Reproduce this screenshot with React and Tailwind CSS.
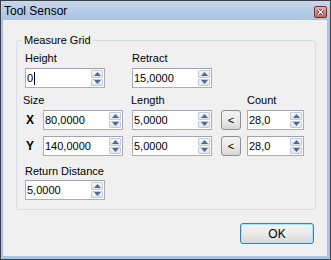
import React from "react";

function Arrow({ up }) {
  return (
    <svg width="7" height="4" viewBox="0 0 7 4">
      {up ? (
        <path d="M0 4 L3.5 0 L7 4 Z" fill="#4c6a9c" />
      ) : (
        <path d="M0 0 L3.5 4 L7 0 Z" fill="#4c6a9c" />
      )}
    </svg>
  );
}

function SpinInput({ value, width, caret }) {
  return (
    <div
      className={`${width} h-[20px] flex items-stretch bg-white border border-[#abadb3] border-t-[#a0a3ab]`}
    >
      <div className="flex-1 pl-[1px] flex items-center text-[11px] leading-none text-black">
        {value}
        {caret && <span className="w-[1px] h-[13px] bg-black ml-[1px]" />}
      </div>
      <div className="w-[13px] flex flex-col gap-[1px] py-[1px] pr-[1px]">
        <div className="flex-1 flex items-center justify-center border border-[#c4cbd7] bg-gradient-to-b from-[#f4f6f9] to-[#dfe5ee] rounded-[1px]">
          <Arrow up />
        </div>
        <div className="flex-1 flex items-center justify-center border border-[#c4cbd7] bg-gradient-to-b from-[#f4f6f9] to-[#dfe5ee] rounded-[1px]">
          <Arrow />
        </div>
      </div>
    </div>
  );
}

function CopyButton() {
  return (
    <button className="w-[20px] h-[20px] flex items-center justify-center rounded-[3px] border border-[#8e8f8f] bg-gradient-to-b from-[#f2f2f2] via-[#ebebeb] to-[#d6d6d6] text-[11px] leading-none text-black">
      &lt;
    </button>
  );
}

export default function App() {
  return (
    <div
      className="w-[331px] h-[260px] flex flex-col border border-[#3c4048] bg-[#a6c4e4] text-black"
      style={{ fontFamily: '"Liberation Sans", Arial, sans-serif' }}
    >
      {/* title bar */}
      <div className="h-[19px] flex items-center justify-between pl-[3px] pr-[3px] bg-gradient-to-b from-[#c5d8ee] to-[#a9c3e3]">
        <span className="text-[12px] leading-none text-black">Tool Sensor</span>
        <div className="w-[13px] h-[12px] mt-[3px] flex items-center justify-center rounded-[2px] border border-[#6e3232] bg-gradient-to-b from-[#e2b3ac] to-[#c06a5e]">
          <svg width="7" height="6" viewBox="0 0 7 6">
            <path d="M1 0.5 L6 5.5 M6 0.5 L1 5.5" stroke="#3a1a1a" strokeWidth="2.6" />
            <path d="M1 0.5 L6 5.5 M6 0.5 L1 5.5" stroke="#ffffff" strokeWidth="1.4" />
          </svg>
        </div>
      </div>

      {/* client area */}
      <div className="flex-1 ml-[2px] mr-[3px] mb-[3px] bg-[#f0f0f0] flex flex-col text-[11px] leading-[14px]">
        <fieldset className="ml-[13px] mt-[13px] w-[300px] h-[177px] border border-[#d5dfe5] rounded-[3px] px-[8px] pt-[4px]">
          <legend className="ml-[-3px] px-[2px] text-[11px] leading-[14px]">Measure Grid</legend>

          <div className="flex">
            <span className="w-[107px]">Height</span>
            <span>Retract</span>
          </div>
          <div className="flex mt-[3px] gap-[27px]">
            <SpinInput value="0" width="w-[80px]" caret />
            <SpinInput value="15,0000" width="w-[80px]" />
          </div>

          <div className="flex mt-[5px]">
            <span className="w-[108px] -ml-[2px]">Size</span>
            <span className="w-[116px]">Length</span>
            <span>Count</span>
          </div>

          {["X", "Y"].map((axis, i) => (
            <div key={axis} className={`flex items-center ${i === 0 ? "mt-[3px]" : "mt-[6px]"}`}>
              <span className="w-[18px] pl-[1px] font-bold text-[12px]">{axis}</span>
              <SpinInput value={axis === "X" ? "80,0000" : "140,0000"} width="w-[80px]" />
              <div className="ml-[9px]">
                <SpinInput value="5,0000" width="w-[80px]" />
              </div>
              <div className="ml-[9px]">
                <CopyButton />
              </div>
              <div className="ml-[6px]">
                <SpinInput value="28,0" width="w-[57px]" />
              </div>
            </div>
          ))}

          <div className="mt-[8px]">Return Distance</div>
          <div className="mt-[2px]">
            <SpinInput value="5,0000" width="w-[80px]" />
          </div>
        </fieldset>

        <div className="flex justify-end mt-[13px] mr-[13px]">
          <button className="w-[74px] h-[21px] rounded-[3px] border border-[#3c7fb1] shadow-[inset_0_0_0_1px_#a8e4fb] bg-gradient-to-b from-[#f4f4f4] via-[#ebebeb] to-[#d8d8d8] text-[12px] leading-none text-black">
            OK
          </button>
        </div>
      </div>
    </div>
  );
}
